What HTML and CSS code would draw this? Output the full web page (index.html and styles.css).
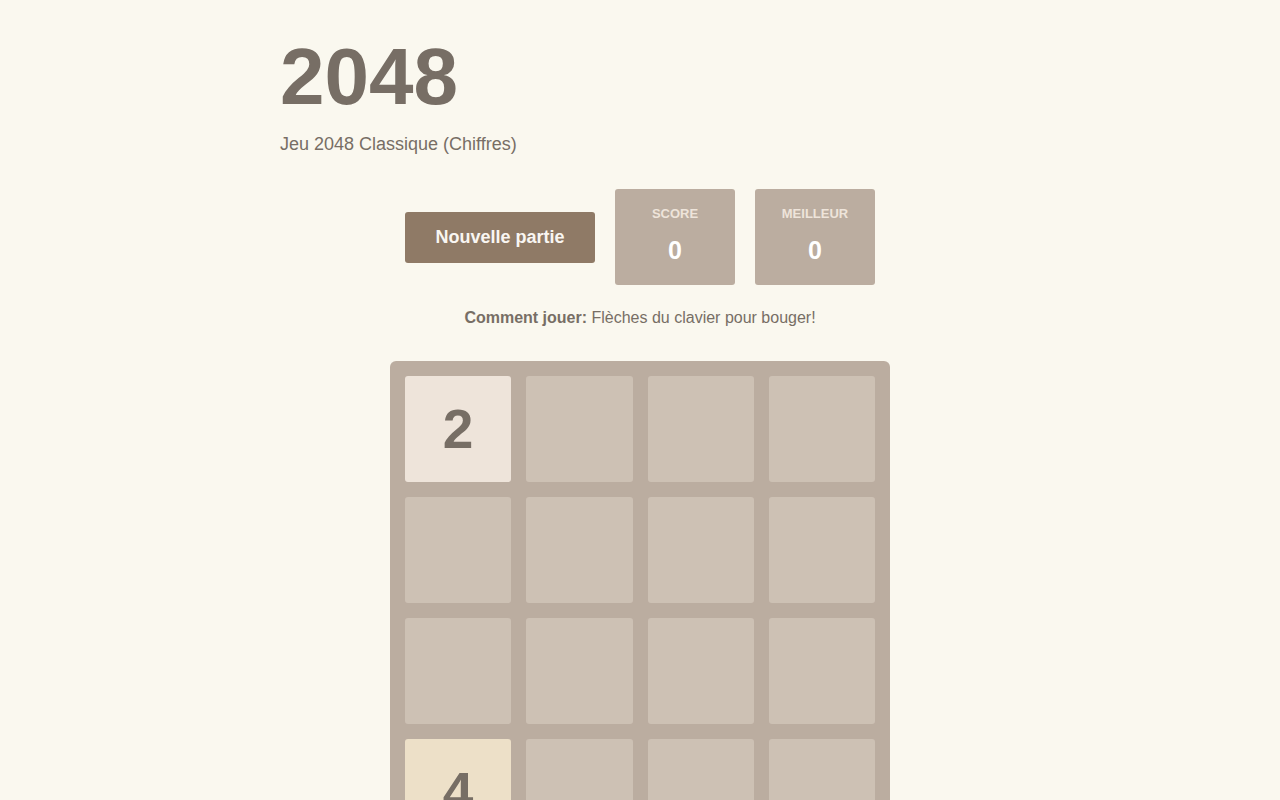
FILE: index.html
```html
<!DOCTYPE html>
<html lang="fr">
<head>
<meta charset="utf-8">
<title>2048</title>
<link rel="stylesheet" href="styles.css">
</head>
<body>
<div class="container">
  <header class="header">
    <h1 class="title">2048</h1>
    <p class="subtitle">Jeu 2048 Classique (Chiffres)</p>
  </header>
  <div class="controls">
    <button class="new-game">Nouvelle partie</button>
    <div class="score-box">
      <div class="score-label">SCORE</div>
      <div class="score-value">0</div>
    </div>
    <div class="score-box">
      <div class="score-label">MEILLEUR</div>
      <div class="score-value">0</div>
    </div>
  </div>
  <p class="howto"><strong>Comment jouer:</strong> Flèches du clavier pour bouger!</p>
  <div class="grid">
    <div class="cell tile-2">2</div>
    <div class="cell"></div>
    <div class="cell"></div>
    <div class="cell"></div>
    <div class="cell"></div>
    <div class="cell"></div>
    <div class="cell"></div>
    <div class="cell"></div>
    <div class="cell"></div>
    <div class="cell"></div>
    <div class="cell"></div>
    <div class="cell"></div>
    <div class="cell tile-4">4</div>
    <div class="cell"></div>
    <div class="cell"></div>
    <div class="cell"></div>
  </div>
</div>
</body>
</html>
```
FILE: styles.css
```css
* { box-sizing: border-box; }
html, body { margin: 0; padding: 0; }
body {
  background: #faf8ef;
  color: #776e65;
  font-family: "Liberation Sans", Arial, sans-serif;
}
.container {
  width: 720px;
  margin: 0 auto;
  padding-top: 37px;
}
.title {
  margin: 0;
  font-size: 80px;
  font-weight: bold;
  line-height: 1;
  color: #776e65;
}
.subtitle {
  margin: 16px 0 0;
  font-size: 18px;
  line-height: 22px;
}
.controls {
  display: flex;
  justify-content: center;
  align-items: center;
  gap: 20px;
  margin-top: 34px;
}
.new-game {
  width: 190px;
  height: 51px;
  border: none;
  border-radius: 3px;
  background: #8f7a66;
  color: #f9f6f2;
  font-family: "Liberation Sans", Arial, sans-serif;
  font-size: 18px;
  font-weight: bold;
  padding: 0;
}
.score-box {
  width: 120px;
  height: 96px;
  background: #bbada0;
  border-radius: 3px;
  display: flex;
  flex-direction: column;
  align-items: center;
  padding-top: 17px;
}
.score-label {
  color: #eee4da;
  font-size: 13px;
  font-weight: bold;
  line-height: 15px;
}
.score-value {
  color: #ffffff;
  font-size: 25px;
  font-weight: bold;
  line-height: 28px;
  margin-top: 15px;
}
.howto {
  text-align: center;
  font-size: 16px;
  margin: 23px 0 0;
  line-height: 20px;
}
.grid {
  width: 500px;
  margin: 33px auto 0;
  background: #bbada0;
  border-radius: 6px;
  padding: 15px;
  display: grid;
  grid-template-columns: repeat(4, 1fr);
  grid-auto-rows: 106px;
  gap: 15px;
}
.cell {
  background: #cdc1b4;
  border-radius: 3px;
  display: flex;
  align-items: center;
  justify-content: center;
  font-size: 55px;
  font-weight: bold;
  color: #776e65;
}
.tile-2 { background: #eee4da; }
.tile-4 { background: #ede0c8; }
```
